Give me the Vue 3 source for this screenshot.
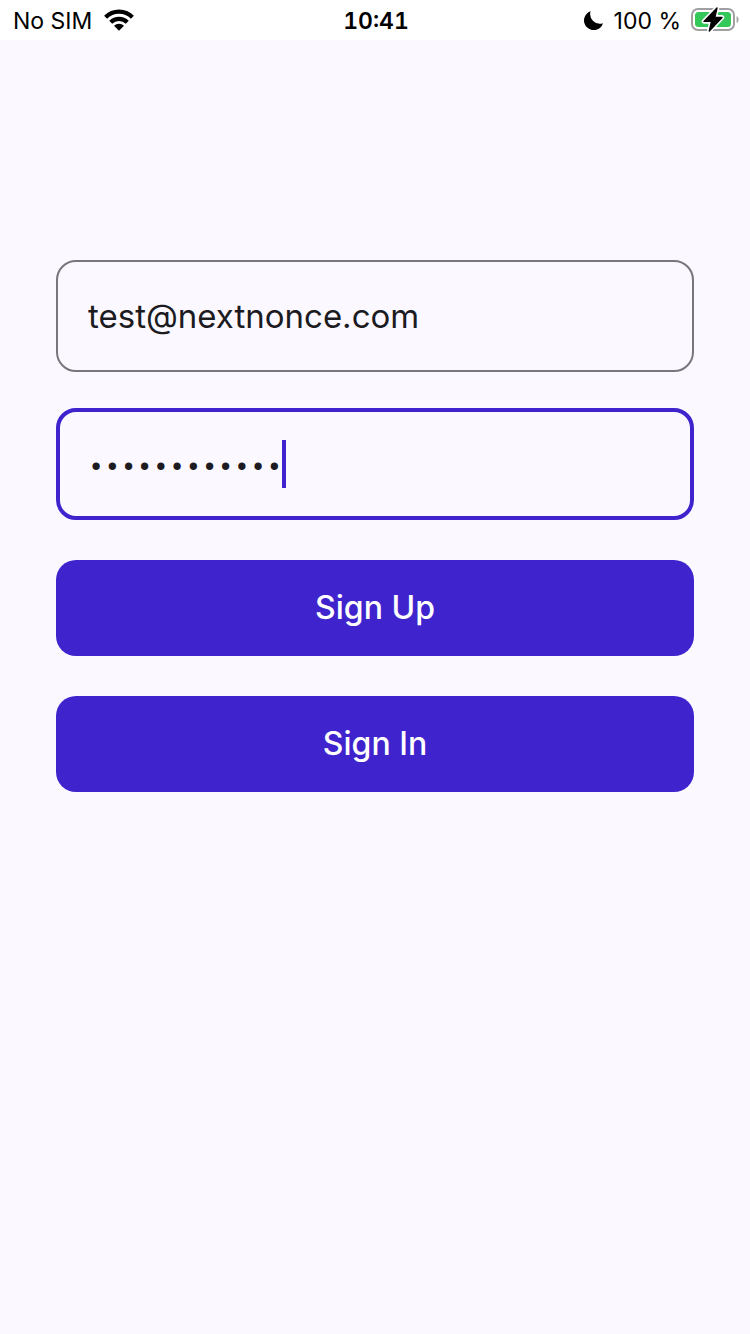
<script setup>
import { ref } from 'vue'

const email = ref('test@nextnonce.com')
const password = ref('nextnonce123')
</script>

<template>
  <div class="screen">
    <header class="status">
      <div class="side">
        <span class="label">No SIM</span>
        <svg class="wifi" viewBox="0 0 30 22" aria-label="Wi-Fi">
          <g fill="none" stroke="#000" stroke-width="4.2">
            <path d="M1.6 8.2 A19 19 0 0 1 28.4 8.2" />
            <path d="M6.7 13.3 A11.8 11.8 0 0 1 23.3 13.3" />
          </g>
          <path d="M10 16.8 A7.1 7.1 0 0 1 20 16.8 L15 21.8 Z" />
        </svg>
      </div>
      <time class="time label">10:41</time>
      <div class="side end">
        <svg class="moon" viewBox="0 0 20 20" aria-label="Do not disturb">
          <path d="M6.6 1.2 A9.7 9.7 0 1 0 19 13.2 A9.7 9.7 0 0 1 6.6 1.2 Z" />
        </svg>
        <span class="label">100 %</span>
        <svg class="battery" viewBox="0 0 48 26" aria-label="Charging">
          <rect x="1" y="2" width="42" height="21" rx="6" fill="none" stroke="#a0a0a2" stroke-width="2" />
          <path d="M45.6 9 Q47.6 10.2 47.6 12.5 T45.6 16 Z" fill="#a0a0a2" />
          <rect x="4" y="5" width="36" height="15" rx="3.5" fill="#34c759" />
          <path
            d="M26 1 L13 14.4 H20.5 L18.3 24 L31 10.4 H23.8 Z"
            stroke="#fff"
            stroke-width="4.6"
            stroke-linejoin="round"
          />
          <path d="M26 1 L13 14.4 H20.5 L18.3 24 L31 10.4 H23.8 Z" stroke="#000" stroke-width="1.4" stroke-linejoin="round" />
        </svg>
      </div>
    </header>

    <form class="form" @submit.prevent>
      <label class="field">
        <input v-model="email" class="email" type="email" aria-label="Email" />
      </label>
      <label class="field active">
        <input v-model="password" class="password" type="password" aria-label="Password" />
        <span class="caret"></span>
      </label>
      <button class="action" type="submit">Sign Up</button>
      <button class="action" type="button">Sign In</button>
    </form>
  </div>
</template>

<style>
body {
  background: #fbf9ff;
}
</style>

<style scoped>
.screen {
  min-height: 100vh;
  background: #fbf9ff;
  color: #1c1b1f;
  font-family: Inter, "Liberation Sans", sans-serif;
}

.status {
  display: grid;
  grid-template-columns: 1fr auto 1fr;
  align-items: center;
  height: 40px;
  padding: 0 11px 0 13px;
  box-sizing: border-box;
  background: #fff;
  color: #000;
  font-size: 23px;
}

.label {
  padding-top: 2px;
}

.side {
  display: flex;
  align-items: center;
  gap: 12px;
}

.end {
  justify-content: flex-end;
  gap: 10px;
}

.time {
  font-weight: 600;
  font-variant-numeric: tabular-nums;
}

.wifi {
  width: 30px;
  height: 22px;
}

.moon {
  width: 20px;
  height: 20px;
}

.battery {
  width: 48px;
  height: 26px;
}

.form {
  display: flex;
  flex-direction: column;
  gap: 40px;
  padding: 220px 56px 0;
}

.field {
  display: flex;
  align-items: center;
  height: 112px;
  padding: 0 30px;
  box-sizing: border-box;
  border: 2px solid #79747e;
  border-radius: 20px;
  cursor: text;
}

.field + .field {
  margin-top: -4px;
}

.active {
  padding: 0 28px;
  border: 4px solid #3f24ce;
}

.field input {
  min-width: 0;
  padding: 0;
  border: 0;
  outline: 0;
  background: transparent;
  color: #1c1b1f;
  font: 400 33px/48px Inter, "Liberation Sans", sans-serif;
  caret-color: #3f24ce;
}

.field .email {
  flex: 1;
}

.field .password {
  padding-top: 8px;
  field-sizing: content;
  font: 400 27px/48px "Liberation Mono", monospace;
}

.caret {
  width: 4px;
  height: 48px;
  background: #3f24ce;
}

.action {
  height: 96px;
  border: 0;
  border-radius: 20px;
  background: #3f24ce;
  color: #fff;
  font: 500 32px/40px Inter, "Liberation Sans", sans-serif;
}
</style>
